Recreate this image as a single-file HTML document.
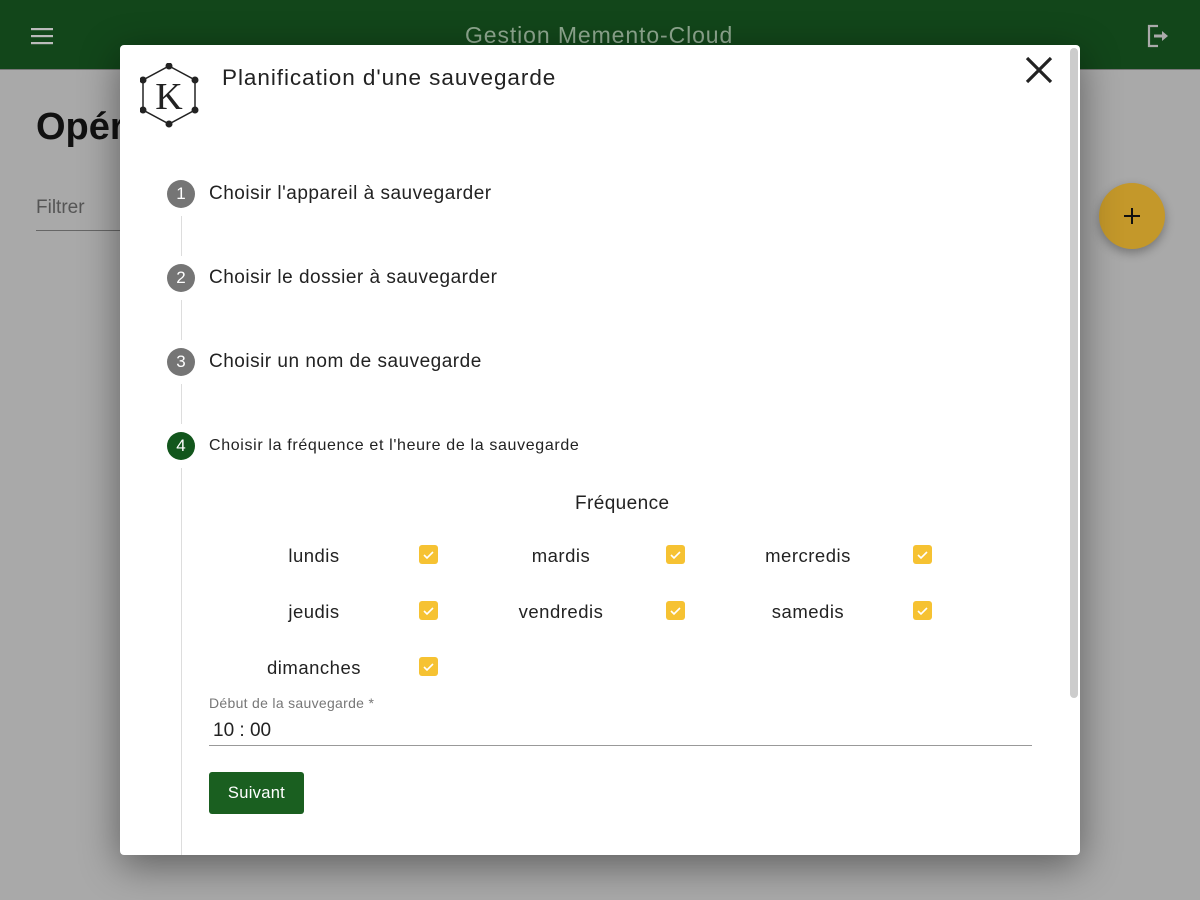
<!DOCTYPE html>
<html><head><meta charset="utf-8"><style>
*{box-sizing:border-box;margin:0;padding:0}
body{width:1200px;height:900px;overflow:hidden;background:#a9a9a9;font-family:"Liberation Sans",sans-serif;position:relative;color:#222}
.hdr{position:absolute;left:0;top:0;width:1200px;height:70px;background:#12461a;border-bottom:1px solid #777}
.t{position:absolute;white-space:nowrap}
.modal{position:absolute;left:120px;top:45px;width:960px;height:810px;background:#fff;border-radius:4px;box-shadow:0 10px 40px rgba(0,0,0,.45);overflow:hidden}
.circ{position:absolute;width:28px;height:28px;border-radius:50%;background:#757575;color:#fff;font-size:17px;text-align:center;line-height:28px}
.vl{position:absolute;left:61px;width:1px;background:#ddd}
.cb{position:absolute;width:19px;height:19px;border-radius:3px;background:#f6c232}
.cb svg{position:absolute;left:3px;top:3px}
.day{position:absolute;font-size:18.5px;width:160px;text-align:center;letter-spacing:.5px}
.st{font-size:19px;letter-spacing:.5px}
</style></head><body>
<div class="hdr">
<svg style="position:absolute;left:31px;top:27px" width="22" height="18"><rect y="1" width="22" height="2.2" fill="#bbb"/><rect y="8" width="22" height="2.2" fill="#bbb"/><rect y="15" width="22" height="2.2" fill="#bbb"/></svg>
<div class="t" style="left:465px;top:22px;font-size:23px;color:#8fa890;letter-spacing:.9px">Gestion Memento-Cloud</div>
<svg style="position:absolute;left:1146px;top:24px" width="24" height="24" viewBox="0 0 24 24"><path d="M12 2H3v20h9" fill="none" stroke="#aaa" stroke-width="2.2"/><path d="M8 12h9" stroke="#aaa" stroke-width="3"/><path d="M16 7l6 5-6 5z" fill="#aaa"/></svg>
</div>
<div class="t" style="left:36px;top:106px;font-size:38px;font-weight:bold;color:#111">Opér</div>
<div class="t" style="left:36px;top:197px;font-size:19px;color:#555">Filtrer</div>
<div style="position:absolute;left:36px;top:230px;width:90px;height:1px;background:#666"></div>
<div style="position:absolute;left:1099px;top:183px;width:66px;height:66px;border-radius:50%;background:#c4982a;box-shadow:0 4px 10px rgba(0,0,0,.3)"></div>
<svg style="position:absolute;left:1122px;top:206px" width="20" height="20"><path d="M10 2v16M2 10h16" stroke="#111" stroke-width="2"/></svg>
<div class="modal">
<svg style="position:absolute;left:20px;top:18px" width="60" height="66" viewBox="0 0 60 66"><polygon points="29,3 55,17 55,47 29,61 3,47 3,17" fill="none" stroke="#222" stroke-width="1.5"/><g fill="#222"><circle cx="29" cy="3" r="3.5"/><circle cx="55" cy="17" r="3.5"/><circle cx="55" cy="47" r="3.5"/><circle cx="29" cy="61" r="3.5"/><circle cx="3" cy="47" r="3.5"/><circle cx="3" cy="17" r="3.5"/></g><text x="29" y="46" font-family="Liberation Serif,serif" font-size="38" text-anchor="middle" fill="#222">K</text></svg>
<div class="t" style="left:102px;top:20px;font-size:22.5px;color:#222;letter-spacing:.95px">Planification d'une sauvegarde</div>
<svg style="position:absolute;left:904px;top:10px" width="30" height="30"><path d="M3 3L27 27M27 3L3 27" stroke="#222" stroke-width="3.2"/></svg>
<div style="position:absolute;left:950px;top:3px;width:8px;height:650px;background:#ccc;border-radius:4px"></div>
<div class="circ" style="left:47px;top:135px">1</div>
<div class="t st" style="left:89px;top:138px">Choisir l'appareil à sauvegarder</div>
<div class="vl" style="top:171px;height:40px"></div>
<div class="circ" style="left:47px;top:219px">2</div>
<div class="t st" style="left:89px;top:222px">Choisir le dossier à sauvegarder</div>
<div class="vl" style="top:255px;height:40px"></div>
<div class="circ" style="left:47px;top:303px">3</div>
<div class="t st" style="left:89px;top:306px">Choisir un nom de sauvegarde</div>
<div class="vl" style="top:339px;height:40px"></div>
<div class="circ" style="left:47px;top:387px;background:#12561c">4</div>
<div class="t" style="left:89px;top:392px;font-size:16px;letter-spacing:.65px">Choisir la fréquence et l'heure de la sauvegarde</div>
<div class="vl" style="top:423px;height:400px"></div>
<div class="t" style="left:455px;top:448px;font-size:19px;letter-spacing:.4px">Fréquence</div>
<div class="day" style="left:114px;top:500px">lundis</div>
<div class="day" style="left:361px;top:500px">mardis</div>
<div class="day" style="left:608px;top:500px">mercredis</div>
<div class="day" style="left:114px;top:556px">jeudis</div>
<div class="day" style="left:361px;top:556px">vendredis</div>
<div class="day" style="left:608px;top:556px">samedis</div>
<div class="day" style="left:114px;top:612px">dimanches</div>
<div class="cb" style="left:299px;top:500px"><svg width="13" height="13"><path d="M2 7l3 3 6-6" fill="none" stroke="#fff" stroke-width="1.6"/></svg></div>
<div class="cb" style="left:546px;top:500px"><svg width="13" height="13"><path d="M2 7l3 3 6-6" fill="none" stroke="#fff" stroke-width="1.6"/></svg></div>
<div class="cb" style="left:793px;top:500px"><svg width="13" height="13"><path d="M2 7l3 3 6-6" fill="none" stroke="#fff" stroke-width="1.6"/></svg></div>
<div class="cb" style="left:299px;top:556px"><svg width="13" height="13"><path d="M2 7l3 3 6-6" fill="none" stroke="#fff" stroke-width="1.6"/></svg></div>
<div class="cb" style="left:546px;top:556px"><svg width="13" height="13"><path d="M2 7l3 3 6-6" fill="none" stroke="#fff" stroke-width="1.6"/></svg></div>
<div class="cb" style="left:793px;top:556px"><svg width="13" height="13"><path d="M2 7l3 3 6-6" fill="none" stroke="#fff" stroke-width="1.6"/></svg></div>
<div class="cb" style="left:299px;top:612px"><svg width="13" height="13"><path d="M2 7l3 3 6-6" fill="none" stroke="#fff" stroke-width="1.6"/></svg></div>
<div class="t" style="left:89px;top:650px;font-size:14px;color:#777;letter-spacing:.3px">Début de la sauvegarde *</div>
<div class="t" style="left:93px;top:675px;font-size:19px;color:#222">10 : 00</div>
<div style="position:absolute;left:89px;top:700px;width:823px;height:1px;background:#999"></div>
<div style="position:absolute;left:89px;top:727px;width:95px;height:42px;background:#1a5f20;border-radius:3px;color:#fff;font-size:16.5px;text-align:center;line-height:42px;letter-spacing:.3px">Suivant</div>
</div>
</body></html>
